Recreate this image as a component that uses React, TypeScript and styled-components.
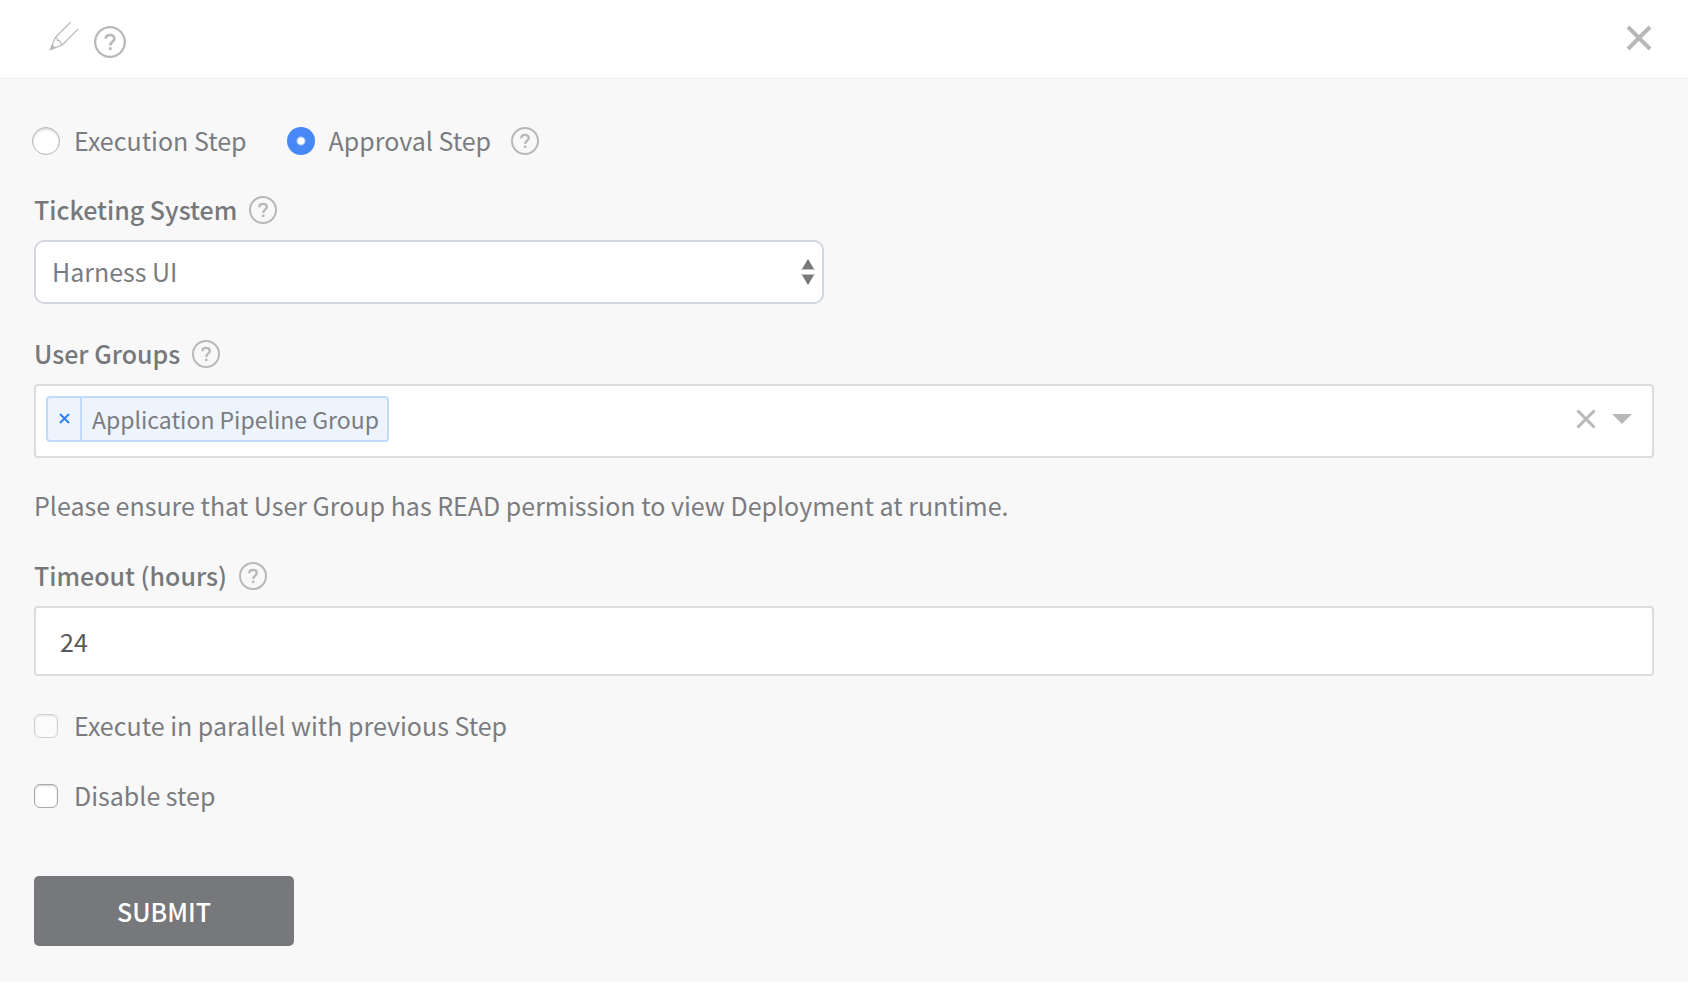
import React, { useState } from "react";
import styled, { createGlobalStyle } from "styled-components";

const color = {
  text: "#7b7c7f",
  strong: "#77787b",
  icon: "#b7b8ba",
  line: "#dcdcdc",
  blue: "#4787f6",
  page: "#f8f8f8",
};

const GlobalStyle = createGlobalStyle`
  *, *::before, *::after { box-sizing: border-box; }
  body {
    margin: 0;
    background: ${color.page};
    color: ${color.text};
    font-family: "Noto Sans CJK SC", "Noto Sans", sans-serif;
    font-size: 25px;
    line-height: 34px;
  }
  button, input, select { font: inherit; color: inherit; margin: 0; }
`;

const Header = styled.header`
  display: flex;
  align-items: center;
  height: 79px;
  padding: 0 36px 2px 48px;
  background: #fff;
  border-bottom: 1px solid #efefef;
`;

const HeaderTools = styled.div`
  display: flex;
  align-items: flex-end;
  gap: 14px;
  padding-top: 2px;
  flex: 1;
`;

const IconButton = styled.button<{ $raised?: boolean }>`
  display: flex;
  padding: 0;
  border: 0;
  background: none;
  color: ${color.icon};
  cursor: pointer;
  margin-bottom: ${(p) => (p.$raised ? "6px" : "0")};
`;

const Form = styled.form`
  display: flex;
  flex-direction: column;
  padding: 44px 34px 36px;
`;

const StepTypes = styled.div`
  display: flex;
  align-items: center;
  margin: 0 -2px;
`;

const Choice = styled.label<{ $gap: number; $end?: number }>`
  display: flex;
  align-items: center;
  gap: ${(p) => p.$gap}px;
  margin-right: ${(p) => p.$end ?? 0}px;
`;

const ChoiceText = styled.span`
  padding-bottom: 2px;
`;

const Radio = styled.input`
  appearance: none;
  width: 28px;
  height: 28px;
  border-radius: 50%;
  background: #fff;
  border: 1px solid #b4b4b4;
  box-shadow: inset 0 2px 2px #dedede;
  &:checked {
    border: 0;
    background: radial-gradient(circle, #fff 0 3px, ${color.blue} 5px);
    box-shadow: none;
  }
`;

const Checkbox = styled.input`
  appearance: none;
  width: 24px;
  height: 24px;
  border-radius: 6px;
  background: #fff;
  border: 1px solid #a9a9a9;
  box-shadow: inset 0 1px 2px #cfcfcf;
  &:disabled { opacity: 0.5; }
`;

const Field = styled.div<{ $top: number }>`
  display: flex;
  flex-direction: column;
  gap: 12px;
  margin-top: ${(p) => p.$top}px;
`;

const FieldHead = styled.div`
  display: flex;
  align-items: center;
  gap: 12px;
`;

const FieldLabel = styled.label`
  padding-bottom: 2px;
  font-weight: 500;
  color: ${color.strong};
`;

const SelectWrap = styled.div`
  position: relative;
  width: 49%;
  min-width: 320px;
  max-width: 790px;
`;

const Select = styled.select`
  appearance: none;
  display: block;
  width: 100%;
  height: 64px;
  padding: 0 48px 2px 16px;
  background: #fff;
  border: 2px solid #d1d6dc;
  border-radius: 10px;
`;

const SelectArrows = styled.svg`
  position: absolute;
  right: 9px;
  top: 19px;
  pointer-events: none;
`;

const TagBox = styled.div`
  display: flex;
  align-items: center;
  gap: 16px;
  height: 74px;
  padding: 0 20px 4px 10px;
  background: #fff;
  border: 2px solid ${color.line};
  border-radius: 4px;
`;

const Tag = styled.span`
  display: flex;
  height: 46px;
  border: 2px solid #bfdafc;
  border-radius: 4px;
  background: #eef4fe;
  font-size: 23px;
  line-height: 42px;
`;

const TagRemove = styled.button`
  display: flex;
  align-items: center;
  justify-content: center;
  width: 34px;
  padding: 0 0 2px;
  border: 0;
  border-right: 2px solid #bfdafc;
  background: none;
  color: #2f80f7;
`;

const TagText = styled.span`
  padding: 0 8px 0 10px;
`;

const TagInput = styled.input`
  flex: 1;
  min-width: 0;
  border: 0;
  outline: 0;
  background: none;
`;

const Hint = styled.p`
  margin: 30px 0 0;
`;

const TextInput = styled.input`
  width: 100%;
  height: 70px;
  padding: 0 24px;
  background: #fff;
  border: 2px solid ${color.line};
  border-radius: 4px;
  color: #58595b;
`;

const Checks = styled.div`
  display: flex;
  flex-direction: column;
  gap: 34px;
  margin-top: 32px;
`;

const Submit = styled.button`
  align-self: flex-start;
  width: 260px;
  height: 70px;
  margin-top: 62px;
  border: 0;
  border-radius: 5px;
  background: #77787b;
  color: #fff;
  font-weight: 500;
`;

function Help({ size = 28, about }: { size?: number; about: string }) {
  return (
    <IconButton type="button" aria-label={`Help: ${about}`}>
      <svg width={size} height={size} viewBox="0 0 28 28" fill="none" stroke="currentColor">
        <circle cx="14" cy="14" r="13" strokeWidth="2" />
        <path d="M10.2 11.2C10.3 9 11.8 7.9 14 7.9S17.8 9.2 17.8 11C17.8 13.8 14.2 13.7 14.2 17" strokeWidth="2.3" />
        <path d="M14.2 18.6V21" strokeWidth="2.5" />
      </svg>
    </IconButton>
  );
}

function Cross({ size, weight }: { size: number; weight: number }) {
  const a = weight / 2;
  const b = size - a;
  return (
    <svg width={size} height={size} fill="none" stroke="currentColor" strokeWidth={weight}>
      <path d={`M${a} ${a}L${b} ${b}M${b} ${a}L${a} ${b}`} />
    </svg>
  );
}

export default function App() {
  const [step, setStep] = useState("approval");
  const [tagged, setTagged] = useState(true);

  return (
    <>
      <GlobalStyle />
      <Header>
        <HeaderTools>
          <IconButton type="button" aria-label="Edit name" $raised>
            <svg width="32" height="32" viewBox="0 0 32 32" fill="none" stroke="currentColor" strokeWidth="1.2">
              <path d="M22.8 2L7 17.8L2.6 29.4L14.2 25L30 9.2" />
              <path d="M7 17.8C9 18 10 18.8 9.6 20.6C11.6 20.3 13 21 12.3 23C13.6 23 14.2 23.8 14.2 25" />
              <path d="M4.3 25.2L6.8 27.8L2.6 29.4Z" fill="currentColor" />
            </svg>
          </IconButton>
          <Help size={32} about="step" />
        </HeaderTools>
        <IconButton type="button" aria-label="Close">
          <Cross size={26} weight={4} />
        </IconButton>
      </Header>

      <Form onSubmit={(e) => e.preventDefault()}>
        <StepTypes role="radiogroup" aria-label="Step type">
          <Choice $gap={14} $end={40}>
            <Radio type="radio" name="step" checked={step === "execution"} onChange={() => setStep("execution")} />
            <ChoiceText>Execution Step</ChoiceText>
          </Choice>
          <Choice $gap={14} $end={20}>
            <Radio type="radio" name="step" checked={step === "approval"} onChange={() => setStep("approval")} />
            <ChoiceText>Approval Step</ChoiceText>
          </Choice>
          <Help about="step type" />
        </StepTypes>

        <Field $top={33}>
          <FieldHead>
            <FieldLabel htmlFor="ticketing">Ticketing System</FieldLabel>
            <Help about="ticketing system" />
          </FieldHead>
          <SelectWrap>
            <Select id="ticketing" defaultValue="Harness UI">
              <option>Harness UI</option>
            </Select>
            <SelectArrows width="14" height="26" viewBox="0 0 14 26" fill="#77787b">
              <path d="M7 0L13 10H1Z" />
              <path d="M1 16H13L7 26Z" />
              <path d="M0 10H14V11H0ZM0 15H14V16H0Z" fill="#c4c4c6" />
            </SelectArrows>
          </SelectWrap>
        </Field>

        <Field $top={32}>
          <FieldHead>
            <FieldLabel htmlFor="groups">User Groups</FieldLabel>
            <Help about="user groups" />
          </FieldHead>
          <TagBox>
            {tagged && (
              <Tag>
                <TagRemove type="button" aria-label="Remove Application Pipeline Group" onClick={() => setTagged(false)}>
                  <Cross size={11} weight={2} />
                </TagRemove>
                <TagText>Application Pipeline Group</TagText>
              </Tag>
            )}
            <TagInput id="groups" />
            <IconButton type="button" aria-label="Clear groups" onClick={() => setTagged(false)}>
              <Cross size={20} weight={3} />
            </IconButton>
            <IconButton type="button" aria-label="Open groups">
              <svg width="20" height="10" fill="currentColor">
                <path d="M0 0H20L10 10Z" />
              </svg>
            </IconButton>
          </TagBox>
        </Field>

        <Hint>Please ensure that User Group has READ permission to view Deployment at runtime.</Hint>

        <Field $top={36}>
          <FieldHead>
            <FieldLabel htmlFor="timeout">Timeout (hours)</FieldLabel>
            <Help about="timeout" />
          </FieldHead>
          <TextInput id="timeout" defaultValue="24" />
        </Field>

        <Checks>
          <Choice $gap={16}>
            <Checkbox type="checkbox" disabled />
            <ChoiceText>Execute in parallel with previous Step</ChoiceText>
          </Choice>
          <Choice $gap={16}>
            <Checkbox type="checkbox" />
            <ChoiceText>Disable step</ChoiceText>
          </Choice>
        </Checks>

        <Submit type="submit">SUBMIT</Submit>
      </Form>
    </>
  );
}
